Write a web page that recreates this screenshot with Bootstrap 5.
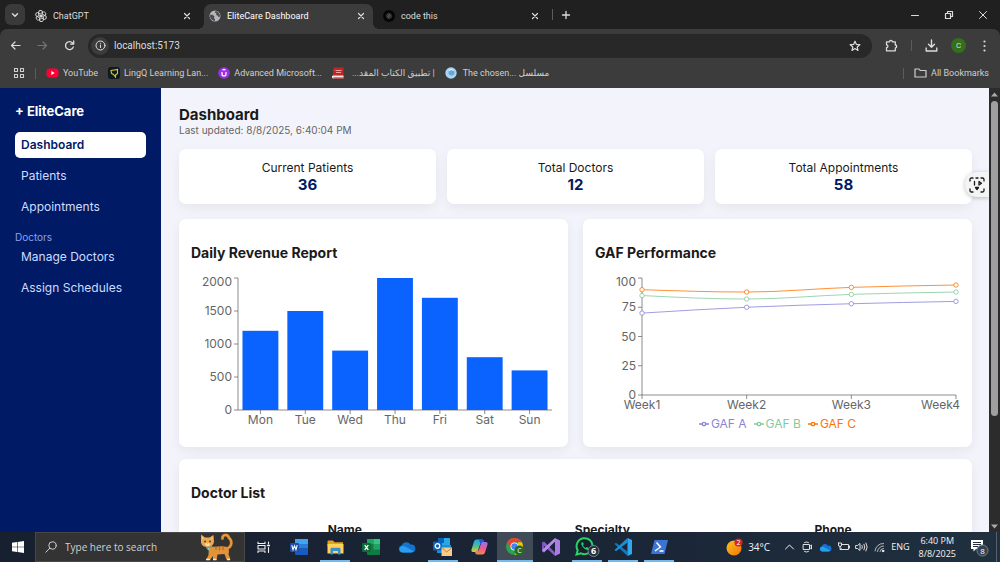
<!DOCTYPE html>
<html lang="en">

<head>
    <meta charset="UTF-8" />
    <meta name="viewport" content="width=device-width, initial-scale=1" />
    <title>EliteCare Dashboard</title>
    <link href="https://cdn.jsdelivr.net/npm/bootstrap@5.3.0/dist/css/bootstrap.min.css" rel="stylesheet" />
    <style>
        body {
            font-family: "Open Sans", "Noto Sans", "DejaVu Sans", sans-serif;
            font-size: 9px;
            line-height: 14px;
            background: #202020;
        }

        button, input {
            font: inherit;
            color: inherit;
            background: none;
            border: 0;
            padding: 0;
        }

        svg { display: block; flex: none; }

        .line-icon {
            fill: none;
            stroke: currentColor;
            stroke-linecap: round;
            stroke-linejoin: round;
        }

        /* browser */
        .browser {
            font-family: Roboto, "Open Sans", "DejaVu Sans", sans-serif;
            color: #dcdcdc;
            background: #202020;
        }

        .tab-strip { height: 29px; padding: 0 12px 0 5px; }

        .tab-search {
            width: 20px;
            height: 21px;
            border-radius: 6px;
            background: #3a3a3a;
            margin-right: 5px;
        }

        .browser-tab {
            width: 174px;
            height: 25px;
            padding: 0 13px 2px 5px;
            gap: 6px;
        }

        .browser-tab.current {
            position: relative;
            width: 169px;
            padding-right: 8px;
            margin-right: 5px;
            background: #3c3c3c;
            border-radius: 7px 7px 0 0;
        }

        .browser-tab.current::before,
        .browser-tab.current::after {
            content: "";
            position: absolute;
            bottom: 0;
            width: 6px;
            height: 6px;
            background: radial-gradient(circle at 0 0, transparent 6px, #3c3c3c 6px);
            right: 100%;
        }

        .browser-tab.current::after {
            background: radial-gradient(circle at 100% 0, transparent 6px, #3c3c3c 6px);
            right: auto;
            left: 100%;
        }

        .address-row {
            height: 33px;
            background: #3c3c3c;
            border-radius: 7px 7px 0 0;
            padding: 0 10px;
            gap: 13px;
        }

        .omnibox {
            height: 24px;
            border-radius: 12px;
            background: #282828;
            padding: 0 11px 0 3px;
            gap: 5px;
            font-size: 10px;
        }

        .site-info {
            width: 18px;
            height: 18px;
            border-radius: 50%;
            background: #3c3c3c;
        }

        .v-rule { width: 1px; height: 11px; background: #5c5c5c; }
        .browser-tools { gap: 13px; }

        .profile {
            width: 15px;
            height: 15px;
            border-radius: 50%;
            background: #356e1c;
            font-size: 8px;
        }

        .bookmarks {
            height: 26px;
            background: #3c3c3c;
            padding: 0 11px 4px 13px;
            gap: 10px;
            color: #cfcfcf;
        }

        .bookmark-list { gap: 10px; }
        .bookmarks a { color: inherit; gap: 4px; }

        /* page */
        .page-view { font-family: Inter, "Liberation Sans", sans-serif; min-height: 0; }

        .side-menu { width: 161px; background: #001a66; padding: 14px 15px; flex: none; }

        .brand-name { font-size: 13px; line-height: 18px; margin-bottom: 12px; }

        .side-menu .nav { gap: 5px; }

        .side-menu .nav-link {
            color: #cfdcff;
            font-size: 12px;
            line-height: 18px;
            padding: 4px 6px;
            border-radius: 5px;
        }

        .side-menu .nav-link.active { background: #fff; color: #001a66; }

        .menu-label { color: #8ba2ea; font-size: 10px; line-height: 13px; margin-top: 11px; }

        .dashboard {
            position: relative;
            background: #f3f4fb;
            color: #1a1a1a;
            padding: 18px 17px 0 18px;
            min-width: 0;
            overflow: hidden;
        }

        .dashboard h1 { font-size: 15px; line-height: 18px; }
        .dashboard h2 { font-size: 14px; line-height: 18px; margin-bottom: 12px; }
        .updated { font-size: 10px; line-height: 12px; color: #666; margin-bottom: 13px; }

        .panel {
            background: #fff;
            border-radius: 7px;
            box-shadow: 0 4px 12px rgba(0, 0, 0, .06);
        }

        .stats { display: grid; grid-template-columns: repeat(3, 1fr); gap: 11px; margin-bottom: 15px; }
        .stat { padding: 11px 12px; font-size: 12px; line-height: 16px; text-align: center; }
        .stat strong { display: block; font-size: 15px; line-height: 17px; color: #001a66; }

        .charts { display: grid; grid-template-columns: repeat(2, 1fr); gap: 15px; margin-bottom: 12px; }
        .block-panel { padding: 25px 12px 12px; }
        .chart-svg { width: 100%; height: auto; overflow: visible; }
        .chart-svg text { font-size: 12px; fill: #666; }
        .axis { stroke: #666; stroke-width: .75; fill: none; }

        .legend-row { font-size: 12px; line-height: 22px; gap: 7px; }
        .legend-row li { gap: 2px; }

        .doctor-table { font-size: 12px; line-height: 16px; }
        .doctor-table th { padding: 8px; border: 0; color: #1a1a1a; }

        .capture-btn {
            position: absolute;
            right: 0;
            top: 84px;
            width: 24px;
            height: 25px;
            border-radius: 12px 0 0 12px;
            background: #f4f4f4;
            box-shadow: 0 1px 4px rgba(0, 0, 0, .25);
        }

        .scroll-track { width: 11px; background: #2c2c2c; flex: none; padding: 4px 0 3px; }
        .scroll-thumb { width: 7px; height: 72%; border-radius: 4px; background: #9f9f9f; margin: 4px 0 auto; }

        /* taskbar */
        .taskbar {
            height: 30px;
            background: linear-gradient(90deg, #17202f, #1a2536 60%, #20303f);
            color: #f2f2f2;
        }

        .start-btn { width: 35px; }

        .search-box {
            width: 210px;
            background: #333;
            border: 1px solid #484848;
            padding: 0 11px 0 9px;
            gap: 8px;
            color: #d0d0d0;
            font-size: 10px;
        }

        .search-box input::placeholder { color: #d0d0d0; opacity: 1; }

        .task-btn { width: 36px; }
        .task-btn.running { background: linear-gradient(#76b9ed, #76b9ed) bottom / 30px 2px no-repeat; }
        .task-btn.focused { background-color: #414b58; background-size: 100% 2px; }
        .tray { gap: 5px; }
        .temperature { font-size: 10px; }
        .clock { line-height: 13px; }
        .show-desktop { width: 4px; border-left: 1px solid #56616d; }
    </style>
</head>

<body class="vh-100 d-flex flex-column overflow-hidden">

    <header class="browser flex-shrink-0">
        <div class="tab-strip d-flex align-items-center">
            <button class="tab-search d-flex align-items-center justify-content-center" aria-label="Search tabs">
                <svg class="line-icon" width="8" height="8" viewBox="0 0 8 8" stroke-width="1.4"><path d="M1.5 2.8 4 5.3l2.5-2.5" /></svg>
            </button>
            <div class="browser-tab d-flex align-items-center align-self-end">
                <svg class="line-icon" width="12" height="12" viewBox="0 0 24 24" stroke-width="1.8">
                    <g id="knot">
                        <path id="petal" d="M12 12V6.5l4.2-2.4a4 4 0 0 1 4.6 6.2l-4.3 2.5" />
                        <use href="#petal" transform="rotate(60 12 12)" /><use href="#petal" transform="rotate(120 12 12)" />
                        <use href="#petal" transform="rotate(180 12 12)" /><use href="#petal" transform="rotate(240 12 12)" />
                        <use href="#petal" transform="rotate(300 12 12)" />
                    </g>
                </svg>
                <span class="flex-grow-1">ChatGPT</span>
                <button aria-label="Close ChatGPT"><svg class="line-icon" width="8" height="8" viewBox="0 0 8 8" stroke-width="1.2"><path d="m1.5 1.5 5 5m0-5-5 5" /></svg></button>
            </div>
            <div class="browser-tab current d-flex align-items-center align-self-end">
                <svg width="12" height="12" viewBox="0 0 12 12"><circle cx="6" cy="6" r="5.5" fill="#b5b8bb" /><path d="M1.5 4.5 4 5l1.5 1.5L5 8l1 1.5v1.4A5 5 0 0 1 1 6zM6.5 1l-.7 1.5 1.7 1L7 5l1.5.5L9.5 7l1.4-.2A5 5 0 0 0 6.5 1z" fill="#4b4d50" /></svg>
                <span class="flex-grow-1 text-white">EliteCare Dashboard</span>
                <button aria-label="Close EliteCare Dashboard"><svg class="line-icon" width="8" height="8" viewBox="0 0 8 8" stroke-width="1.2"><path d="m1.5 1.5 5 5m0-5-5 5" /></svg></button>
            </div>
            <div class="browser-tab d-flex align-items-center align-self-end">
                <svg width="12" height="12" viewBox="0 0 24 24"><circle cx="12" cy="12" r="12" fill="#050505" /><use href="#knot" transform="translate(6 6) scale(.5)" fill="none" stroke="#888" stroke-width="1.5" /></svg>
                <span class="flex-grow-1">code this</span>
                <button aria-label="Close code this"><svg class="line-icon" width="8" height="8" viewBox="0 0 8 8" stroke-width="1.2"><path d="m1.5 1.5 5 5m0-5-5 5" /></svg></button>
            </div>
            <span class="v-rule"></span>
            <button class="ms-2" aria-label="New tab"><svg class="line-icon" width="10" height="10" viewBox="0 0 10 10" stroke-width="1.3"><path d="M5 1.5v7M1.5 5h7" /></svg></button>
            <div class="ms-auto d-flex align-items-center gap-4">
                <button aria-label="Minimize"><svg class="line-icon" width="10" height="10" viewBox="0 0 10 10"><path d="M1.5 5.5h7" /></svg></button>
                <button aria-label="Restore"><svg class="line-icon" width="10" height="10" viewBox="0 0 10 10" stroke-width="1.2"><path d="M1.5 3.5h5v5h-5zM3.5 3V1.5h5v5H7" /></svg></button>
                <button aria-label="Close"><svg class="line-icon" width="10" height="10" viewBox="0 0 10 10"><path d="m1.5 1.5 7 7m0-7-7 7" /></svg></button>
            </div>
        </div>

        <div class="address-row d-flex align-items-center">
            <div class="d-flex gap-3">
                <button aria-label="Back"><svg class="line-icon" width="11" height="11" viewBox="0 0 11 11" stroke-width="1.2"><path d="M10 5.5H1.5M5 2 1.5 5.5 5 9" /></svg></button>
                <button aria-label="Forward" class="text-secondary"><svg class="line-icon" width="11" height="11" viewBox="0 0 11 11" stroke-width="1.2"><path d="M1 5.5h8.5M6 2l3.5 3.5L6 9" /></svg></button>
                <button aria-label="Reload"><svg class="line-icon" width="11" height="11" viewBox="0 0 11 11" stroke-width="1.3"><path d="M9.3 7A4 4 0 1 1 8.6 3L9.6 4M9.7 1v3.1H6.6" /></svg></button>
            </div>
            <div class="omnibox d-flex align-items-center flex-grow-1">
                <button class="site-info d-flex align-items-center justify-content-center" aria-label="Site information"><svg class="line-icon" width="11" height="11" viewBox="0 0 11 11"><circle cx="5.5" cy="5.5" r="4.5" /><path d="M5.5 5v2.6M5.5 3.2v.1" /></svg></button>
                <input class="flex-grow-1" type="text" value="localhost:5173" aria-label="Address" />
                <button aria-label="Bookmark this page"><svg class="line-icon" width="12" height="12" viewBox="0 0 12 12" stroke-width="1.2"><path d="m6 1.2 1.4 3.2 3.4.3-2.6 2.3.8 3.4-3-1.8-3 1.8.8-3.4L1.2 4.7l3.4-.3z" /></svg></button>
            </div>
            <div class="browser-tools d-flex align-items-center">
                <button aria-label="Extensions"><svg class="line-icon" width="13" height="13" viewBox="0 0 13 13" stroke-width="1.3"><path d="M1.5 2.8h3a1.4 1.4 0 0 1 2.8 0h3v3.2a1.4 1.4 0 0 1 0 2.8v3H1.5V8.7a1.4 1.4 0 0 0 0-2.8z" /></svg></button>
                <span class="v-rule"></span>
                <button aria-label="Downloads"><svg class="line-icon" width="13" height="13" viewBox="0 0 13 13" stroke-width="1.4"><path d="M6.5 1v7M3.5 5.2l3 3 3-3M1.2 9v3h10.6V9" /></svg></button>
                <button class="profile d-flex align-items-center justify-content-center" aria-label="Profile">C</button>
                <button aria-label="Menu"><svg width="11" height="12" viewBox="0 0 11 12" fill="currentColor"><circle cx="5.5" cy="1.5" r="1.1" /><circle cx="5.5" cy="6" r="1.1" /><circle cx="5.5" cy="10.5" r="1.1" /></svg></button>
            </div>
        </div>

        <nav class="bookmarks d-flex align-items-center" aria-label="Bookmarks">
            <button aria-label="Apps"><svg class="line-icon" width="12" height="12" viewBox="0 0 12 12" stroke-width="1.1"><path d="M1.5 1.5h3v3h-3zM7.5 1.5h3v3h-3zM1.5 7.5h3v3h-3zM7.5 7.5h3v3h-3z" /></svg></button>
            <span class="v-rule"></span>
            <div class="bookmark-list d-flex">
                <a href="#" class="d-flex align-items-center text-decoration-none">
                    <svg width="13" height="12" viewBox="0 0 13 12"><rect x=".5" y="1.5" width="12" height="9" rx="3" fill="#f03" /><path d="m5.3 4 3.4 2-3.4 2z" fill="#fff" /></svg>YouTube</a>
                <a href="#" class="d-flex align-items-center text-decoration-none">
                    <svg width="12" height="12" viewBox="0 0 12 12"><rect width="12" height="12" rx="3" fill="#0d1a24" /><path d="M3 3.5 9.5 2.5v4L7.5 8v2L5.5 7.5 3.5 6.5z" fill="none" stroke="#e3cb1d" stroke-width="1.1" /></svg>LingQ Learning Lan...</a>
                <a href="#" class="d-flex align-items-center text-decoration-none">
                    <svg width="12" height="12" viewBox="0 0 12 12"><circle cx="6" cy="6" r="5.8" fill="#9a2fe6" /><path d="M4 5v2a2 2 0 0 0 4 0V5M4.5 3.2 6 2.3l1.5.9" fill="none" stroke="#fff" stroke-width="1.2" /></svg>Advanced Microsoft...</a>
                <a href="#" class="d-flex align-items-center text-decoration-none gap-2">
                    <svg width="12" height="12" viewBox="0 0 12 12"><path d="M2 .5h9.5v8H1V1.5z" fill="#c42522" /><path d="M1 8.5h10.5v3H2a1.2 1.2 0 0 1-1-3z" fill="#f4eded" /><path d="M1 10.5h10.5v1H2z" fill="#b11" /><path d="M3.5 3.5h6M4 5.5h5" stroke="#e8a09c" /></svg><span dir="rtl" lang="ar">| تطبيق الكتاب المقد...</span></a>
                <a href="#" class="d-flex align-items-center text-decoration-none">
                    <svg width="14" height="12" viewBox="0 0 14 12"><circle cx="6" cy="6" r="5.7" fill="#a9d5f3" /><circle cx="6.5" cy="5.5" r="3" fill="#67a7d7" /><path d="M4 3.5q2-2 4.5 0" stroke="#fff" fill="none" /></svg><span>The chosen... <span lang="ar">مسلسل</span></span></a>
            </div>
            <span class="v-rule ms-auto"></span>
            <a href="#" class="d-flex align-items-center text-decoration-none"><svg class="line-icon" width="13" height="12" viewBox="0 0 13 12" stroke-width="1.2"><path d="M1 10V2h4l1.2 1.5H12V10z" /></svg>All Bookmarks</a>
        </nav>
    </header>

    <div class="page-view d-flex flex-grow-1 overflow-hidden">
        <aside class="side-menu">
            <div class="brand-name fw-bold text-white">+ EliteCare</div>
            <nav class="nav flex-column">
                <a class="nav-link active fw-semibold" href="#" aria-current="page">Dashboard</a>
                <a class="nav-link" href="#">Patients</a>
                <a class="nav-link" href="#">Appointments</a>
            </nav>
            <div class="menu-label">Doctors</div>
            <nav class="nav flex-column">
                <a class="nav-link" href="#">Manage Doctors</a>
                <a class="nav-link" href="#">Assign Schedules</a>
            </nav>
        </aside>

        <main class="dashboard flex-grow-1">
            <h1 class="fw-bold mb-0">Dashboard</h1>
            <p class="updated">Last updated: 8/8/2025, 6:40:04 PM</p>

            <section class="stats">
                <div class="panel stat">Current Patients<strong>36</strong></div>
                <div class="panel stat">Total Doctors<strong>12</strong></div>
                <div class="panel stat">Total Appointments<strong>58</strong></div>
            </section>

            <section class="charts">
                <div class="panel block-panel">
                    <h2 class="fw-bold">Daily Revenue Report</h2>
                    <svg id="revenueChart" class="chart-svg" viewBox="0 0 365 161" role="img" aria-label="Daily Revenue Report"></svg>
                </div>
                <div class="panel block-panel">
                    <h2 class="fw-bold">GAF Performance</h2>
                    <svg id="gafChart" class="chart-svg" viewBox="0 0 365 139" role="img" aria-label="GAF Performance"></svg>
                    <ul id="gafLegend" class="legend-row list-unstyled d-flex justify-content-center mb-0"></ul>
                </div>
            </section>

            <section class="panel block-panel">
                <h2 class="fw-bold">Doctor List</h2>
                <table class="doctor-table w-100 text-center">
                    <colgroup><col style="width: 40%" /><col style="width: 27%" /><col style="width: 33%" /></colgroup>
                    <thead>
                        <tr><th scope="col">Name</th><th scope="col">Specialty</th><th scope="col">Phone</th></tr>
                    </thead>
                </table>
            </section>

            <button class="capture-btn d-flex align-items-center justify-content-center" aria-label="Capture">
                <svg class="line-icon" width="16" height="16" viewBox="0 0 16 16" stroke-width="1.3"><path d="M1 4V2.5Q1 1 2.5 1H4M7 1h2M12 1h1.5Q15 1 15 2.5V4M15 12v1.5q0 1.5-1.5 1.5H12M4 15H2.5Q1 15 1 13.5V12M5.5 4.5V8M10 4.5l2.5 1.7L10 8z" /><path d="M6.5 10.5h3L8 12.5z" fill="currentColor" /></svg>
            </button>
        </main>

        <div class="scroll-track d-flex flex-column align-items-center" aria-hidden="true">
            <svg width="7" height="5" viewBox="0 0 7 5"><path d="M0 4.5 3.5.5 7 4.5z" fill="#aaa" /></svg>
            <div class="scroll-thumb"></div>
            <svg width="7" height="5" viewBox="0 0 7 5"><path d="M0 .5h7L3.5 4.5z" fill="#aaa" /></svg>
        </div>
    </div>

    <footer class="taskbar d-flex flex-shrink-0">
        <button class="start-btn d-flex align-items-center justify-content-center" aria-label="Start">
            <svg width="12" height="12" viewBox="0 0 12 12" fill="#fff"><path d="M0 1.7 5 1v4.7H0zM5.6.9 12 0v5.7H5.6zM0 6.3h5V11l-5-.7zM5.6 6.3H12V12l-6.4-.9z" /></svg>
        </button>
        <label class="search-box d-flex align-items-center">
            <svg class="line-icon" width="12" height="12" viewBox="0 0 12 12"><circle cx="7.5" cy="4.5" r="3.7" /><path d="M4.8 7.2.8 11.2" /></svg>
            <input class="flex-grow-1 w-50" type="text" placeholder="Type here to search" aria-label="Search" />
            <svg width="34" height="28" viewBox="0 0 34 28">
                <path d="M27 16c7-2 6-9 3-11-1-4-7-4-6.5.5" fill="none" stroke="#b96b22" stroke-width="3" stroke-linecap="round" />
                <path d="M27 16c7-2 6-9 3-11-1-4-7-4-6.5.5" fill="none" stroke="#e79a3c" stroke-width="2" stroke-linecap="round" />
                <path d="M10 13c6 2 12-1 18 1q3 3 1.5 7l2 5.5h-4L25.5 21l-7 .5-1 5.5h-3.5v-4L11 27H7l2.5-5z" fill="#e2933a" />
                <path d="M2 1.5 6 4.5h4.5l4-2.5.5 7q-1 5-6.5 5T2 9.5z" fill="#f0a84d" />
                <path d="M3 3.5 5 5 3 6.5zM13.5 4l-2 1.2 2 1.5z" fill="#f6c7a0" />
                <circle cx="6" cy="8.5" r="1" fill="#35533a" /><circle cx="11" cy="8.5" r="1" fill="#35533a" />
                <ellipse cx="8.5" cy="11.3" rx="2.3" ry="1.6" fill="#ffe4c0" /><path d="M8 10.5h1.2l-.6.8z" fill="#a04a3a" />
                <path d="M7 14.5q4 1 6-1" stroke="#4fae9c" stroke-width="1.5" fill="none" /><circle cx="9.5" cy="16" r="1.2" fill="#7fd0c0" />
                <path d="M17 14v3M20.5 14v3.5M24 14v3" stroke="#b8661d" stroke-width="1.2" /><path d="M7 26.5h4M14 26.5h3.5M28 26.5h3" stroke="#ffe4c0" stroke-width="1.5" />
            </svg>
        </label>

        <button class="task-btn d-flex align-items-center justify-content-center" aria-label="Task view">
            <svg class="line-icon" width="13" height="12" viewBox="0 0 13 12" stroke-width="1.1"><path d="M1 1v1.5h7V1M1 4.5h7v3.5H1zM1 11.5V10h7v1.5M11.5 1v2M11.5 6.5v5" /><path d="M10.5 4.5h2" stroke-width="1.6" /></svg>
        </button>
        <button class="task-btn d-flex align-items-center justify-content-center" aria-label="Word">
            <svg width="18" height="16" viewBox="0 0 18 16"><rect x="5" y="0" width="13" height="16" rx="1" fill="#185abd" /><path d="M5 0h13v5H5z" fill="#41a5ee" /><path d="M5 5h13v4H5z" fill="#2b7cd3" /><rect y="4" width="9" height="9" rx="1" fill="#1d4fa8" /><path d="m1.8 6.2 1.2 4.5 1.5-4 1.5 4 1.2-4.5" fill="none" stroke="#fff" stroke-width="1.1" /></svg>
        </button>
        <button class="task-btn running d-flex align-items-center justify-content-center" aria-label="File Explorer">
            <svg width="17" height="15" viewBox="0 0 17 15"><path d="M.5 1.5Q.5.5 1.5.5H6l1.5 1.7H16v4H.5z" fill="#e5a11b" /><path d="M.5 4h16v9.5H.5z" fill="#ffd257" /><path d="M3.5 14.5V8.8q0-1 1-1h8q1 0 1 1v5.7h-2.5V11h-5v3.5z" fill="#3a8fd3" /></svg>
        </button>
        <button class="task-btn d-flex align-items-center justify-content-center" aria-label="Excel">
            <svg width="18" height="16" viewBox="0 0 18 16"><rect x="5" width="13" height="16" rx="1" fill="#107c41" /><path d="M5 0h6.5v5H5z" fill="#21a366" /><path d="M11.5 0H18v5h-6.5z" fill="#33c481" /><path d="M11.5 5H18v5.5h-6.5z" fill="#21a366" /><rect y="4" width="9" height="9" rx="1" fill="#0c6b37" /><path d="m2.7 6.2 3.6 4.6m0-4.6-3.6 4.6" stroke="#fff" stroke-width="1.3" /></svg>
        </button>
        <button class="task-btn d-flex align-items-center justify-content-center" aria-label="OneDrive">
            <svg width="18" height="12" viewBox="0 0 18 12"><path id="cloud" d="M4 11.5A3.5 3.5 0 0 1 3.6 4.6 5 5 0 0 1 12.5 3.5a4 4 0 0 1 1.5 8z" fill="#1373cf" /><path d="M4.2 11.5a3.5 3.5 0 0 1-.7-6.5q2.5-.5 5 1.2l7 4q-.5 1-2 1.3z" fill="#28a0ee" /></svg>
        </button>
        <button class="task-btn running d-flex align-items-center justify-content-center" aria-label="Outlook">
            <svg width="20" height="18" viewBox="0 0 20 18"><rect x="5" y="0" width="12" height="10" rx="1" fill="#28a8ea" /><path d="M5 0h6v5H5z" fill="#0364b8" /><path d="M4 7h14v8H4z" fill="#1490df" /><rect y="3.5" width="9" height="9" rx="1" fill="#0f63b8" /><circle cx="4.5" cy="8" r="2.3" fill="none" stroke="#fff" stroke-width="1.3" /><path d="M8.5 9.5H19V18H8.5z" fill="#f7cb8b" /><path d="m8.5 9.5 5.3 4.5L19 9.5" fill="none" stroke="#c58b45" /></svg>
        </button>
        <button class="task-btn d-flex align-items-center justify-content-center" aria-label="Copilot">
            <svg width="17" height="16" viewBox="0 0 17 16">
                <defs>
                    <linearGradient id="copA" x1="0" y1="0" x2="0" y2="1"><stop stop-color="#1fa5f0" /><stop offset=".55" stop-color="#4fc08d" /><stop offset="1" stop-color="#f3c52e" /></linearGradient>
                    <linearGradient id="copB" x1="0" y1="0" x2="0" y2="1"><stop stop-color="#9b6df0" /><stop offset=".5" stop-color="#e75a9b" /><stop offset="1" stop-color="#f5873f" /></linearGradient>
                </defs>
                <path d="M5.5.5H11q1.5 0 2 2L12 4h-1.5q-1 0-1.3 1L7 11.5Q6.5 13 5 13H2Q0 13 .5 10.5L3 2.5Q3.7.5 5.5.5z" fill="url(#copA)" />
                <path d="M11.5 15.5H6q-1.5 0-2-2L5 12h1.5q1 0 1.3-1L10 4.5Q10.5 3 12 3h3q2 0 1.5 2.5l-2.5 8q-.7 2-2.5 2z" fill="url(#copB)" />
                <path d="M11 .5q1.5 0 2 2.5h-1q-1.5 0-2 1.5L9.2 5 8 .5z" fill="#2456d6" />
            </svg>
        </button>
        <button class="task-btn running focused d-flex align-items-center justify-content-center" aria-label="Chrome">
            <svg width="19" height="18" viewBox="0 0 19 18"><circle cx="8.5" cy="8.5" r="8.5" fill="#2ba24c" /><path d="M1.1 4.3A8.5 8.5 0 0 1 15.9 4.3H8.5L5 10.5z" fill="#ea4335" /><path d="M15.9 4.3A8.5 8.5 0 0 1 8.5 17l4-6.5-.5-6.2z" fill="#fbc116" /><circle cx="8.5" cy="8.5" r="4" fill="#fff" /><circle cx="8.5" cy="8.5" r="3.2" fill="#4285f4" /><circle cx="13.5" cy="12.5" r="5" fill="#286a1e" /><text x="13.5" y="15" font-size="7" text-anchor="middle" fill="#fff">C</text></svg>
        </button>
        <button class="task-btn d-flex align-items-center justify-content-center" aria-label="Visual Studio">
            <svg width="18" height="18" viewBox="0 0 18 18"><path d="M0 4.5 2 3.5 13 14.5V18L0 6z" fill="#8a5cc7" /><path d="M0 5v8.5l2 1V4z" fill="#8152c4" /><path d="M2 14.5 13 3.5V0L0 12z" fill="#b78bea" /><path d="m13 0 5 2.5v13L13 18z" fill="#a97be3" /></svg>
        </button>
        <button class="task-btn running d-flex align-items-center justify-content-center" aria-label="WhatsApp">
            <svg width="25" height="20" viewBox="0 0 25 20"><path d="m1.5 17.5 1.2-4.3A8 8 0 1 1 6 16.3z" fill="#14202c" stroke="#27d366" stroke-width="2" /><path d="M6.5 5.5Q5.5 7 7.5 9.7T12.5 13q1.5-.3 1.3-2L11.5 10l-1 1Q8.5 10 7.8 8.3l1-1L8 5.2z" fill="#27d366" /><circle cx="18.5" cy="14" r="5.5" fill="#25303b" stroke="#7c848c" /><text x="18.5" y="17" font-size="9" font-weight="700" text-anchor="middle" fill="#fff">6</text></svg>
        </button>
        <button class="task-btn running d-flex align-items-center justify-content-center" aria-label="Visual Studio Code">
            <svg width="18" height="18" viewBox="0 0 18 18"><path d="M.5 6 2 4.8 13.5 13.5V18z" fill="#1177bb" /><path d="M.5 12 2 13.2 13.5 4.5V0z" fill="#1d8fd6" /><path d="m13.5 0 4.5 2v14l-4.5 2z" fill="#2ea9f0" /></svg>
        </button>
        <button class="task-btn running d-flex align-items-center justify-content-center" aria-label="PowerShell">
            <svg width="17" height="14" viewBox="0 0 17 14"><path d="M3.5 0H17l-3.5 14H0z" fill="#3c74d4" /><path d="m5.5 2.5 4 4.5-5.5 4M8.5 11h4" fill="none" stroke="#fff" stroke-width="1.4" /></svg>
        </button>

        <div class="tray ms-auto d-flex align-items-center">
            <a href="#" class="d-flex align-items-center text-reset text-decoration-none gap-1 me-2">
                <svg width="18" height="18" viewBox="0 0 18 18"><defs><linearGradient id="sun" x1="0" y1="0" x2="1" y2="1"><stop stop-color="#ffc21f" /><stop offset="1" stop-color="#ef7308" /></linearGradient></defs><circle cx="8" cy="10" r="7.5" fill="url(#sun)" /><circle cx="12.5" cy="4.5" r="4" fill="#d3271e" /><text x="12.5" y="7" font-size="7" text-anchor="middle" fill="#fff">2</text></svg>
                <span class="temperature">34°C</span>
            </a>
            <button aria-label="Show hidden icons"><svg class="line-icon" width="13" height="12" viewBox="0 0 13 12"><path d="m2.5 8 4-4 4 4" /></svg></button>
            <button aria-label="Meet now"><svg class="line-icon" width="13" height="12" viewBox="0 0 13 12" stroke-width=".9"><path d="M2.5 3.5h6v5h-6zM8.5 5.5l2-1.5v4l-2-1.5M3.5 1.5q2-1.2 4 0M3.5 10.5q2 1.2 4 0" /></svg></button>
            <button aria-label="OneDrive status"><svg width="13" height="9" viewBox="0 0 18 12"><use href="#cloud" /><path d="M4.2 11.5a3.5 3.5 0 0 1-.7-6.5q2.5-.5 5 1.2l7 4q-.5 1-2 1.3z" fill="#28a0ee" /></svg></button>
            <button aria-label="Battery"><svg class="line-icon" width="13" height="12" viewBox="0 0 13 12" stroke-width=".9"><path d="M5 3.5h6.5v5H4V7M12.5 5v2M1.5 2v2q0 1.5 1.5 1.5T4.5 4V2h-3M3 5.5v3h1" /></svg></button>
            <button aria-label="Volume"><svg class="line-icon" width="13" height="12" viewBox="0 0 13 12" stroke-width=".9"><path d="M1 4.5h1.5L5 2.5v7l-2.5-2H1zM7 4.5q1 1.5 0 3M9 3.2q1.7 2.8 0 5.6M11 2q2.5 4 0 8" /></svg></button>
            <button aria-label="Network"><svg class="line-icon" width="13" height="12" viewBox="0 0 13 12"><path d="M2 10A8 8 0 0 1 10.5 2.5M4.5 10.5A6 6 0 0 1 10.5 5M7 10.5a3.5 3.5 0 0 1 3.5-3" opacity=".7" /><circle cx="10" cy="10" r=".8" fill="currentColor" /></svg></button>
            <button aria-label="Input language">ENG</button>
            <button class="clock ms-1 text-center">6:40 PM<br />8/8/2025</button>
            <button class="ms-2" aria-label="Notifications"><svg width="22" height="20" viewBox="0 0 22 20"><path d="M2 3h12v9H7l-2.5 2.5V12H2z" fill="#fff" /><path d="M4 5.5h8M4 7.5h8M4 9.5h5" stroke="#20303f" /><circle cx="13.5" cy="13.5" r="5.5" fill="#34404d" stroke="#78828c" /><text x="13.5" y="16.5" font-size="8" text-anchor="middle" fill="#fff">8</text></svg></button>
            <div class="show-desktop align-self-stretch"></div>
        </div>
    </footer>

    <script src="https://cdn.jsdelivr.net/npm/bootstrap@5.3.0/dist/js/bootstrap.bundle.min.js"></script>

    <script>
        const revenue = [
            { day: 'Mon', value: 1200 },
            { day: 'Tue', value: 1500 },
            { day: 'Wed', value: 900 },
            { day: 'Thu', value: 2000 },
            { day: 'Fri', value: 1700 },
            { day: 'Sat', value: 800 },
            { day: 'Sun', value: 600 }
        ];
        const weeks = ['Week1', 'Week2', 'Week3', 'Week4'];
        const gaf = [
            { name: 'GAF A', color: '#8884d8', values: [70, 75, 78, 80] },
            { name: 'GAF B', color: '#82ca9d', values: [85, 82, 86, 88] },
            { name: 'GAF C', color: '#ff7300', values: [90, 88, 92, 94] }
        ];
        const left = 47;
        const right = 361;
        const top0 = 4;

        // Y axis with its ticks; the top label sits just under its tick
        function yAxis(ticks, bottom) {
            const max = ticks[ticks.length - 1];
            let out = `<path class="axis" d="M${left} ${top0}V${bottom}" />`;
            ticks.forEach(t => {
                const y = bottom - (bottom - top0) * t / max;
                const labelY = t === max ? y + 8 : y + 4;
                out += `<path class="axis" d="M${left - 4} ${y}H${left}" />`;
                out += `<text x="${left - 6}" y="${labelY}" text-anchor="end">${t}</text>`;
            });
            return out;
        }

        function drawBars() {
            const bottom = 136;
            const band = (right - left) / revenue.length;
            let out = yAxis([0, 500, 1000, 1500, 2000], bottom);
            out += `<path class="axis" d="M${left} ${bottom}H${right}" />`;
            revenue.forEach((d, i) => {
                const h = (bottom - top0) * d.value / 2000;
                const x = left + band * i;
                const mid = x + band / 2;
                out += `<rect x="${x + band * 0.1}" y="${bottom - h}" width="${band * 0.8}" height="${h}" fill="#0b63ff" />`;
                out += `<path class="axis" d="M${mid} ${bottom}v4" />`;
                out += `<text x="${mid}" y="150" text-anchor="middle">${d.day}</text>`;
            });
            document.getElementById('revenueChart').innerHTML = out;
        }

        // Smooth line whose tangents follow the neighbouring points
        function curve(pts) {
            const step = pts[1][0] - pts[0][0];
            const s = pts.slice(1).map((p, i) => (p[1] - pts[i][1]) / step);
            const m = pts.map((p, i) => {
                if (i === 0 || i === pts.length - 1) return null;
                if (s[i - 1] * s[i] <= 0) return 0;
                return (s[i - 1] + s[i]) / 2;
            });
            m[0] = (3 * s[0] - m[1]) / 2;
            m[m.length - 1] = (3 * s[s.length - 1] - m[m.length - 2]) / 2;
            let d = `M${pts[0]}`;
            for (let i = 1; i < pts.length; i++) {
                const k = step / 3;
                d += `C${pts[i - 1][0] + k},${pts[i - 1][1] + m[i - 1] * k} ${pts[i][0] - k},${pts[i][1] - m[i] * k} ${pts[i]}`;
            }
            return d;
        }

        function drawLines() {
            const bottom = 121;
            const step = (right - left) / (weeks.length - 1);
            let out = yAxis([0, 25, 50, 75, 100], bottom);
            out += `<path class="axis" d="M${left} ${bottom}H${right}" />`;
            weeks.forEach((w, i) => {
                const x = left + step * i;
                const last = i === weeks.length - 1;
                out += `<path class="axis" d="M${x} ${bottom}v4" />`;
                out += `<text x="${last ? x + 4 : x}" y="135" text-anchor="${last ? 'end' : 'middle'}">${w}</text>`;
            });
            gaf.forEach(line => {
                const pts = line.values.map((v, i) => [left + step * i, bottom - (bottom - top0) * v / 100]);
                out += `<path d="${curve(pts)}" fill="none" stroke="${line.color}" stroke-width=".8" />`;
                pts.forEach(p => {
                    out += `<circle cx="${p[0]}" cy="${p[1]}" r="2.2" fill="#fff" stroke="${line.color}" stroke-width=".8" />`;
                });
            });
            document.getElementById('gafChart').innerHTML = out;

            document.getElementById('gafLegend').innerHTML = gaf.map(line => `
                <li class="d-flex align-items-center" style="color: ${line.color}">
                    <svg width="10" height="10" viewBox="0 0 10 10" fill="none" stroke="currentColor" stroke-width="1.3"><path d="M0 5h3.3M6.7 5H10" /><circle cx="5" cy="5" r="1.7" /></svg>${line.name}
                </li>`).join('');
        }

        drawBars();
        drawLines();
    </script>

</body>

</html>
